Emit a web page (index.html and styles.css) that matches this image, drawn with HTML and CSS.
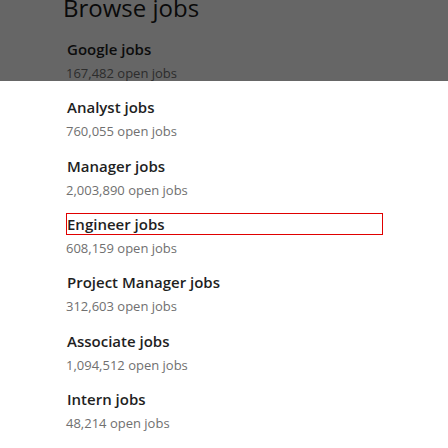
FILE: index.html
```html
<!DOCTYPE html>
<html lang="en">
<head>
<meta charset="utf-8">
<title>Browse jobs</title>
<link rel="stylesheet" href="styles.css">
</head>
<body>
<main class="page">
  <h1 class="heading">Browse jobs</h1>
  <ul class="jobs">
    <li class="job"><a class="job-title" href="#">Google jobs</a><span class="job-count">167,482 open jobs</span></li>
    <li class="job"><a class="job-title" href="#">Analyst jobs</a><span class="job-count">760,055 open jobs</span></li>
    <li class="job"><a class="job-title" href="#">Manager jobs</a><span class="job-count">2,003,890 open jobs</span></li>
    <li class="job"><a class="job-title is-focused" href="#">Engineer jobs</a><span class="job-count">608,159 open jobs</span></li>
    <li class="job"><a class="job-title" href="#">Project Manager jobs</a><span class="job-count">312,603 open jobs</span></li>
    <li class="job"><a class="job-title" href="#">Associate jobs</a><span class="job-count">1,094,512 open jobs</span></li>
    <li class="job"><a class="job-title" href="#">Intern jobs</a><span class="job-count">48,214 open jobs</span></li>
  </ul>
  <div class="overlay"></div>
</main>
</body>
</html>
```
FILE: styles.css
```css
html, body {
  margin: 0;
  padding: 0;
  background: #ffffff;
}
body {
  font-family: "Open Sans", "Noto Sans", sans-serif;
  color: #1f1f1f;
  overflow: hidden;
}
.page {
  position: relative;
  width: 448px;
  height: 448px;
}
.heading {
  margin: -4px 0 0 0;
  padding: 0 0 0 63px;
  font-size: 24px;
  font-weight: 400;
  line-height: 24px;
  color: #1a1a1a;
}
.jobs {
  list-style: none;
  margin: 17.8px 0 0 0;
  padding: 0 0 0 66px;
  width: 317px;
}
.job {
  display: flex;
  flex-direction: column;
  margin-bottom: 14.4px;
}
.job-title {
  display: block;
  font-size: 15px;
  font-weight: 600;
  line-height: 20px;
  color: #1f1f1f;
  text-decoration: none;
  border: 1px solid transparent;
}
.job-title.is-focused {
  border-color: #e00000;
}
.job-count {
  margin-top: 4px;
  font-size: 13px;
  line-height: 18px;
  color: #707070;
}
.overlay {
  position: absolute;
  left: 0;
  top: 0;
  width: 448px;
  height: 85px;
  background: rgba(0, 0, 0, 0.6);
}
```
